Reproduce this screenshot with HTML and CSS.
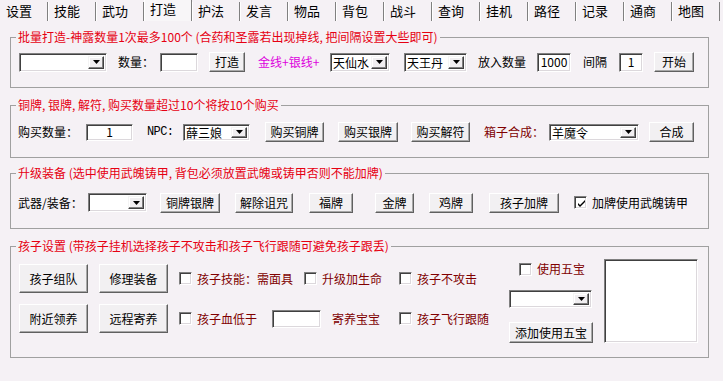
FILE: index.html
```html
<!DOCTYPE html>
<html lang="zh-CN">
<head>
<meta charset="utf-8">
<title>打造</title>
<link rel="stylesheet" href="styles.css">
</head>
<body>
<div class="tabs">
  <div class="tab">设置</div><div class="tab">技能</div><div class="tab">武功</div><div class="tab active">打造</div><div class="tab">护法</div><div class="tab">发言</div><div class="tab">物品</div><div class="tab">背包</div><div class="tab">战斗</div><div class="tab">查询</div><div class="tab">挂机</div><div class="tab">路径</div><div class="tab">记录</div><div class="tab">通商</div><div class="tab">地图</div>
</div>

<fieldset class="grp g1">
  <legend>批量打造-神露数量1次最多100个 (合药和圣露若出现掉线, 把间隔设置大些即可)</legend>
  <div class="row r1">
    <div class="sel w88"><span class="sv"></span><span class="dd"><svg width="7" height="4" viewBox="0 0 7 4"><path d="M0 0H7L3.5 4Z"/></svg></span></div>
    <span>数量：</span>
    <div class="inp w38"></div>
    <button class="btn w36">打造</button>
    <span class="mag">金线+银线+</span>
    <div class="sel w60"><span class="sv">天仙水</span><span class="dd"><svg width="7" height="4" viewBox="0 0 7 4"><path d="M0 0H7L3.5 4Z"/></svg></span></div>
    <div class="sel w63"><span class="sv">天王丹</span><span class="dd"><svg width="7" height="4" viewBox="0 0 7 4"><path d="M0 0H7L3.5 4Z"/></svg></span></div>
    <span>放入数量</span>
    <div class="inp w34">1000</div>
    <span>间隔</span>
    <div class="inp w24">1</div>
    <button class="btn w40">开始</button>
  </div>
</fieldset>

<fieldset class="grp g2">
  <legend>铜牌, 银牌, 解符, 购买数量超过10个将按10个购买</legend>
  <div class="row r2">
    <span>购买数量：</span>
    <div class="inp w47 h17">1</div>
    <span class="mono">NPC:</span>
    <div class="sel w67 h17"><span class="sv">薛三娘</span><span class="dd"><svg width="7" height="4" viewBox="0 0 7 4"><path d="M0 0H7L3.5 4Z"/></svg></span></div>
    <button class="btn w59">购买铜牌</button>
    <button class="btn w60">购买银牌</button>
    <button class="btn w59">购买解符</button>
    <span class="dr">箱子合成：</span>
    <div class="sel w90 h17"><span class="sv">羊魔令</span><span class="dd"><svg width="7" height="4" viewBox="0 0 7 4"><path d="M0 0H7L3.5 4Z"/></svg></span></div>
    <button class="btn w45">合成</button>
  </div>
</fieldset>

<fieldset class="grp g3">
  <legend>升级装备 (选中使用武魄铸甲, 背包必须放置武魄或铸甲否则不能加牌)</legend>
  <div class="row r3">
    <span>武器/装备：</span>
    <div class="sel w59"><span class="sv"></span><span class="dd"><svg width="7" height="4" viewBox="0 0 7 4"><path d="M0 0H7L3.5 4Z"/></svg></span></div>
    <button class="btn w60 h21">铜牌银牌</button>
    <button class="btn w58 h21">解除诅咒</button>
    <button class="btn w44 h21">福牌</button>
    <button class="btn w39 h21">金牌</button>
    <button class="btn w44 h21">鸡牌</button>
    <button class="btn w70 h21">孩子加牌</button>
    <label class="chk"><span class="box"><svg width="9" height="9" viewBox="0 0 9 9"><path d="M1 4L3 6L8 1V3L3 8L1 6Z"/></svg></span>加牌使用武魄铸甲</label>
  </div>
</fieldset>

<fieldset class="grp g4">
  <legend>孩子设置 (带孩子挂机选择孩子不攻击和孩子飞行跟随可避免孩子跟丢)</legend>
  <div class="kid">
    <div class="kid-left">
      <div class="row ra">
        <button class="btn big">孩子组队</button>
        <button class="btn big">修理装备</button>
        <label class="chk dr"><span class="box"></span>孩子技能：需面具</label>
        <label class="chk dr"><span class="box"></span>升级加生命</label>
        <label class="chk dr"><span class="box"></span>孩子不攻击</label>
      </div>
      <div class="row rb">
        <button class="btn big">附近领养</button>
        <button class="btn big">远程寄养</button>
        <label class="chk dr"><span class="box"></span>孩子血低于</label>
        <div class="inp w49 h18"></div>
        <span class="dr">寄养宝宝</span>
        <label class="chk dr"><span class="box"></span>孩子飞行跟随</label>
      </div>
    </div>
    <div class="kid-right">
      <label class="chk dr wu"><span class="box"></span>使用五宝</label>
      <div class="sel w83 h18 wsel"><span class="sv"></span><span class="dd"><svg width="7" height="4" viewBox="0 0 7 4"><path d="M0 0H7L3.5 4Z"/></svg></span></div>
      <button class="btn add">添加使用五宝</button>
    </div>
    <div class="list"></div>
  </div>
</fieldset>
</body>
</html>
```

FILE: styles.css
```css
* { box-sizing: border-box; }
html, body { margin: 0; background: #f5f1f5; }
body {
  width: 723px; height: 381px; overflow: hidden;
  font: 12px/14px "Noto Sans CJK SC", sans-serif; color: #000;
}

/* tabs */
.tabs { display: flex; height: 21px; padding-top: 2px; }
.tab {
  width: 48px; height: 19px; flex: none;
  border-left: 1px solid #fff; border-right: 1px solid #808080;
  padding-left: 5px; font-size: 13px; line-height: 17px; white-space: nowrap;
}
.tab:first-child { border-left-color: transparent; }
.tab.active { margin-top: -2px; height: 21px; line-height: 17px; background: #f8f6f8; }

/* group boxes */
.grp {
  margin: 0 0 0 10px; width: 699px; padding: 0; min-width: 0;
  border: 1px solid #a0a0a0;
}
.grp legend { margin-left: 5px; padding: 0 2px; color: #e60012; line-height: 14px; white-space: nowrap; }
.g1 { margin-top: 9px; padding: 8px 0 15px; }
.g2 { margin-top: 10px; padding: 10px 0 15px; }
.g3 { margin-top: 8px; padding: 12px 0 15px; }
.g4 { margin-top: 10px; }

.row { display: grid; align-items: center; white-space: nowrap; }
.r1 { height: 20px; padding-left: 8px; grid-template-columns: 99px 42px 49px 49px 72px 74px 74px 59px 46px 36px 35px 40px; }
.r2 { height: 20px; padding-left: 7px; grid-template-columns: 68px 61px 36px 82px 73px 73px 73px 65px 100px 45px; }
.r3 { height: 21px; padding-left: 7px; grid-template-columns: 70px 72px 75px 74px 66px 54px 60px 85px auto; }

.mag { color: #dd00dd; }
.dr { color: #800000; }
.mono { font-family: "Liberation Mono", monospace; font-size: 12px; letter-spacing: -0.6px; }

/* sunken edit / combo */
.inp, .sel, .list {
  background: #fff;
  border: 1px solid; border-color: #808080 #fff #fff #808080;
  box-shadow: inset 1px 1px 0 #404040, inset -1px -1px 0 #dcd8dc;
}
.inp { height: 19px; display: flex; align-items: center; justify-content: center; line-height: 14px; }
.sel { height: 19px; display: flex; align-items: stretch; padding: 2px 2px 2px 1px; }
.sel .sv { flex: 1; min-width: 0; padding-left: 1px; line-height: 13px; display: flex; align-items: center; white-space: nowrap; }
.sel .dd {
  width: 16px; flex: none; background: #f0eef0;
  border: 1px solid; border-color: #f4f4f4 #404040 #404040 #f4f4f4;
  box-shadow: inset -1px -1px 0 #808080, inset 1px 1px 0 #fff;
  display: flex; align-items: center; justify-content: center;
}
.sel .dd svg { display: block; }

.h17 { height: 17px; }
.h18 { height: 18px; }
.h21 { height: 21px; }
.w24 { width: 24px; } .w34 { width: 34px; } .w36 { width: 36px; } .w38 { width: 38px; }
.w39 { width: 39px; } .w40 { width: 40px; } .w44 { width: 44px; } .w45 { width: 45px; }
.w47 { width: 47px; } .w49 { width: 49px; } .w58 { width: 58px; } .w59 { width: 59px; }
.w60 { width: 60px; } .w63 { width: 63px; } .w67 { width: 67px; } .w70 { width: 70px; }
.w83 { width: 83px; } .w88 { width: 88px; } .w90 { width: 90px; }

/* raised button */
.btn {
  height: 20px; padding: 0; margin: 0;
  font: inherit; color: #000; background: #f2f0f2;
  border: 1px solid; border-color: #fff #606060 #606060 #fff;
  box-shadow: inset -1px -1px 0 #a8a8a8;
  display: flex; align-items: center; justify-content: center; white-space: nowrap;
}
.btn.big { width: 69px; height: 29px; }
.btn.add { width: 84px; height: 21px; margin-top: 14px; }

/* checkbox */
.chk { display: flex; align-items: center; white-space: nowrap; }
.chk .box {
  width: 13px; height: 13px; flex: none; margin-right: 5px; background: #fff;
  border: 1px solid; border-color: #808080 #fff #fff #808080;
  box-shadow: inset 1px 1px 0 #404040, inset -1px -1px 0 #dcd8dc;
  display: flex; align-items: center; justify-content: center;
}
.chk .box svg { display: block; margin: 1px 0 0 1px; }

/* kid settings */
.kid { display: flex; align-items: flex-start; padding: 6px 0 14px; }
.kid-left { margin-left: 8px; width: 490px; padding-top: 5px; display: flex; flex-direction: column; gap: 11px; }
.ra { height: 29px; grid-template-columns: 80px 80px 125px 95px auto; }
.rb { height: 29px; grid-template-columns: 80px 80px 93px 60px 67px auto; }
.kid-right { width: 84px; display: flex; flex-direction: column; }
.wu { height: 20px; padding-left: 10px; }
.wsel { margin-top: 11px; }
.list { width: 94px; height: 84px; margin-left: 11px; }
```
